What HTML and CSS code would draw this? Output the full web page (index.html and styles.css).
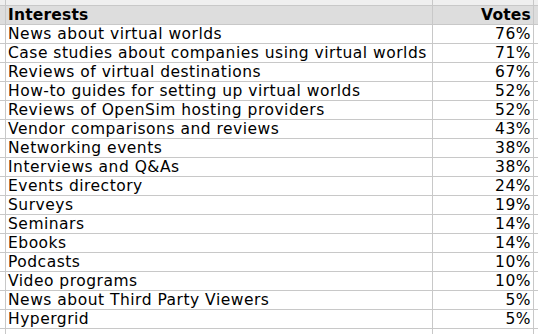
FILE: index.html
```html
<!DOCTYPE html>
<html>
<head>
<meta charset="utf-8">
<link rel="stylesheet" href="styles.css">
</head>
<body>
<div class="sheet">
  <div class="c top"></div><div class="c top"></div><div class="c top"></div><div class="c top"></div>

  <div class="c hd"></div><div class="c hd name">Interests</div><div class="c hd num">Votes</div><div class="c hd"></div>

  <div class="c"></div><div class="c name">News about virtual worlds</div><div class="c num">76%</div><div class="c"></div>
  <div class="c"></div><div class="c name">Case studies about companies using virtual worlds</div><div class="c num">71%</div><div class="c"></div>
  <div class="c"></div><div class="c name">Reviews of virtual destinations</div><div class="c num">67%</div><div class="c"></div>
  <div class="c"></div><div class="c name">How-to guides for setting up virtual worlds</div><div class="c num">52%</div><div class="c"></div>
  <div class="c"></div><div class="c name">Reviews of OpenSim hosting providers</div><div class="c num">52%</div><div class="c"></div>
  <div class="c"></div><div class="c name">Vendor comparisons and reviews</div><div class="c num">43%</div><div class="c"></div>
  <div class="c"></div><div class="c name">Networking events</div><div class="c num">38%</div><div class="c"></div>
  <div class="c"></div><div class="c name">Interviews and Q&amp;As</div><div class="c num">38%</div><div class="c"></div>
  <div class="c"></div><div class="c name">Events directory</div><div class="c num">24%</div><div class="c"></div>
  <div class="c"></div><div class="c name">Surveys</div><div class="c num">19%</div><div class="c"></div>
  <div class="c"></div><div class="c name">Seminars</div><div class="c num">14%</div><div class="c"></div>
  <div class="c"></div><div class="c name">Ebooks</div><div class="c num">14%</div><div class="c"></div>
  <div class="c"></div><div class="c name">Podcasts</div><div class="c num">10%</div><div class="c"></div>
  <div class="c"></div><div class="c name">Video programs</div><div class="c num">10%</div><div class="c"></div>
  <div class="c"></div><div class="c name">News about Third Party Viewers</div><div class="c num">5%</div><div class="c"></div>
  <div class="c"></div><div class="c name">Hypergrid</div><div class="c num">5%</div><div class="c"></div>

  <div class="c"></div><div class="c"></div><div class="c"></div><div class="c"></div>
</div>
</body>
</html>
```
FILE: styles.css
```css
html, body {
  margin: 0;
  padding: 0;
  background: #ffffff;
}
.sheet {
  display: grid;
  grid-template-columns: 5px 426px 100px 4px;
  grid-template-rows: 5px repeat(17, 18px) 5px;
  gap: 1px;
  background: #c8c8c8;
  width: 538px;
  height: 334px;
  overflow: hidden;
  font-family: "DejaVu Sans", Verdana, sans-serif;
  font-size: 15.5px;
  letter-spacing: 0.5px;
  color: #000000;
}
.c {
  background: #ffffff;
  line-height: 18px;
  white-space: nowrap;
  overflow: hidden;
}
.c.top {
  background: #efefef;
}
.c.hd {
  background: #dddddd;
  font-weight: bold;
  letter-spacing: 0.2px;
}
.name {
  padding-left: 2px;
}
.num {
  text-align: right;
  padding-right: 2px;
}
```
